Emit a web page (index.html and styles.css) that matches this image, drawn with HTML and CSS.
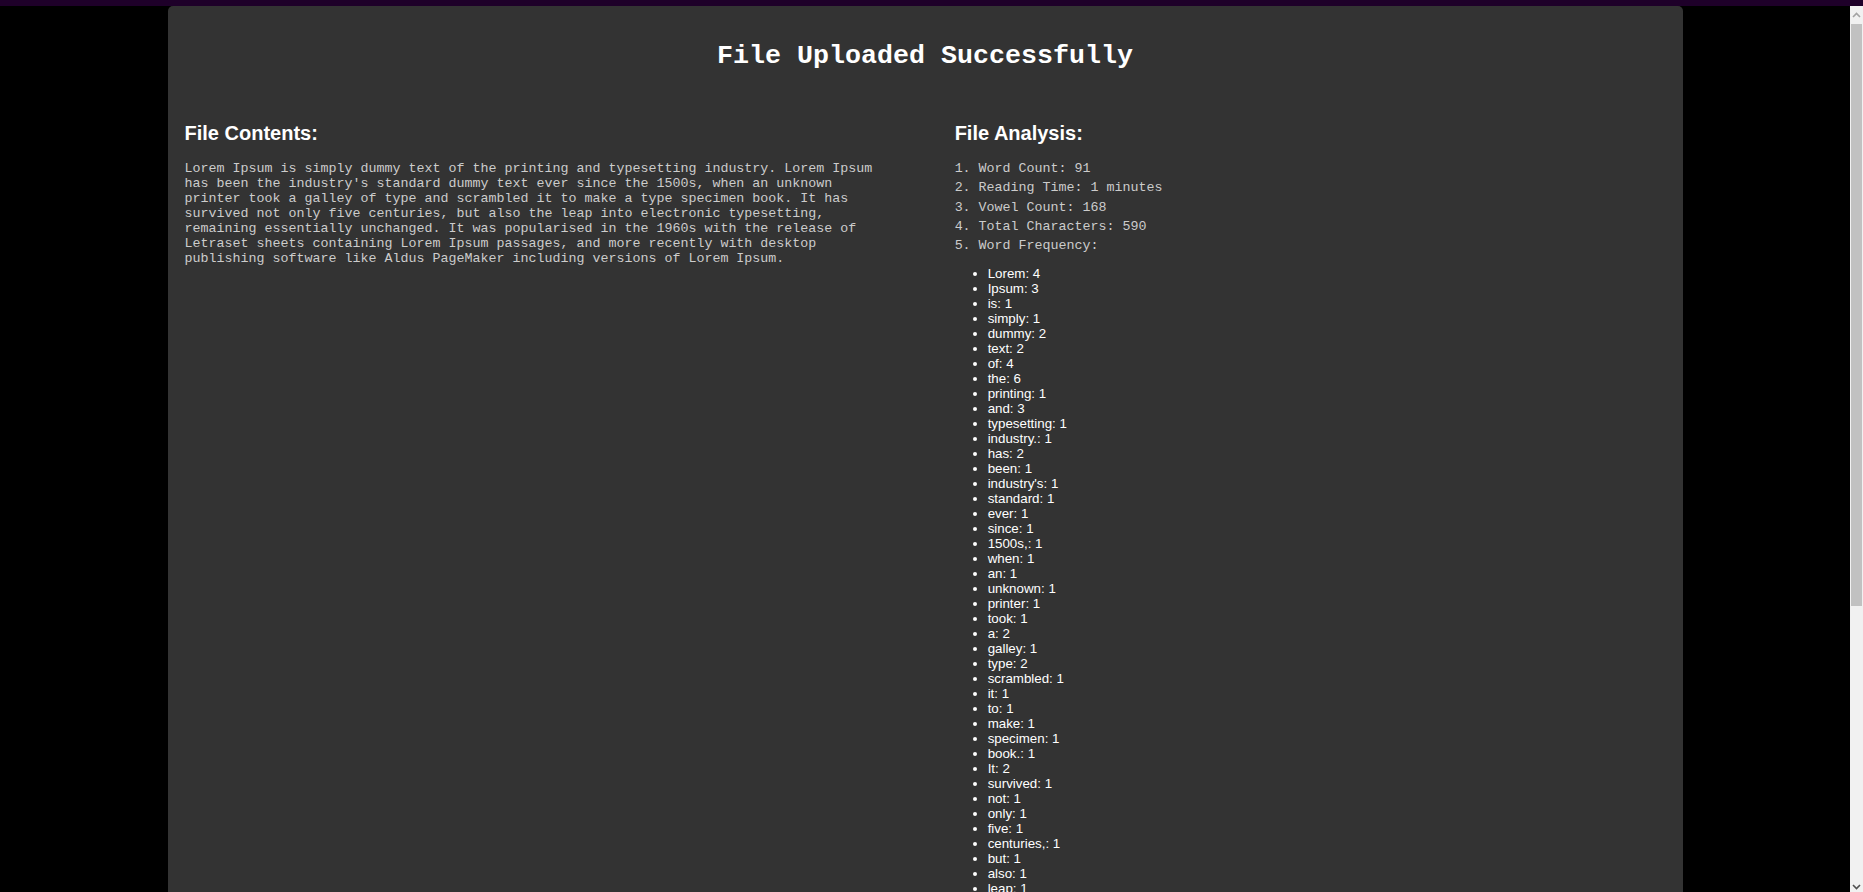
FILE: index.html
```html
<!DOCTYPE html>
<html lang="en">
<head>
<meta charset="utf-8">
<title>File Uploaded Successfully</title>
<link rel="stylesheet" href="styles.css">
</head>
<body>
<div class="topbar"></div>
<div class="page">
  <div class="card">
    <h1 class="title">File Uploaded Successfully</h1>
    <div class="columns">
      <section class="col">
        <h2 class="heading">File Contents:</h2>
        <p class="contents">Lorem Ipsum is simply dummy text of the printing and typesetting industry. Lorem Ipsum has been the industry's standard dummy text ever since the 1500s, when an unknown printer took a galley of type and scrambled it to make a type specimen book. It has survived not only five centuries, but also the leap into electronic typesetting, remaining essentially unchanged. It was popularised in the 1960s with the release of Letraset sheets containing Lorem Ipsum passages, and more recently with desktop publishing software like Aldus PageMaker including versions of Lorem Ipsum.</p>
      </section>
      <section class="col">
        <h2 class="heading">File Analysis:</h2>
        <div class="stats">
          <div class="stat">1. Word Count: 91</div>
          <div class="stat">2. Reading Time: 1 minutes</div>
          <div class="stat">3. Vowel Count: 168</div>
          <div class="stat">4. Total Characters: 590</div>
          <div class="stat">5. Word Frequency:</div>
        </div>
        <ul class="freq">
          <li>Lorem: 4</li>
          <li>Ipsum: 3</li>
          <li>is: 1</li>
          <li>simply: 1</li>
          <li>dummy: 2</li>
          <li>text: 2</li>
          <li>of: 4</li>
          <li>the: 6</li>
          <li>printing: 1</li>
          <li>and: 3</li>
          <li>typesetting: 1</li>
          <li>industry.: 1</li>
          <li>has: 2</li>
          <li>been: 1</li>
          <li>industry's: 1</li>
          <li>standard: 1</li>
          <li>ever: 1</li>
          <li>since: 1</li>
          <li>1500s,: 1</li>
          <li>when: 1</li>
          <li>an: 1</li>
          <li>unknown: 1</li>
          <li>printer: 1</li>
          <li>took: 1</li>
          <li>a: 2</li>
          <li>galley: 1</li>
          <li>type: 2</li>
          <li>scrambled: 1</li>
          <li>it: 1</li>
          <li>to: 1</li>
          <li>make: 1</li>
          <li>specimen: 1</li>
          <li>book.: 1</li>
          <li>It: 2</li>
          <li>survived: 1</li>
          <li>not: 1</li>
          <li>only: 1</li>
          <li>five: 1</li>
          <li>centuries,: 1</li>
          <li>but: 1</li>
          <li>also: 1</li>
          <li>leap: 1</li>
        </ul>
      </section>
    </div>
  </div>
</div>
<div class="scrollbar">
  <div class="sb-btn sb-up"><svg width="9" height="6" viewBox="0 0 9 6"><path d="M1 5 L4.5 1.5 L8 5" fill="none" stroke="#a3a3a3" stroke-width="1.6"/></svg></div>
  <div class="sb-thumb"></div>
  <div class="sb-btn sb-down"><svg width="9" height="6" viewBox="0 0 9 6"><path d="M1 1 L4.5 4.5 L8 1" fill="none" stroke="#505050" stroke-width="1.6"/></svg></div>
</div>
</body>
</html>
```

FILE: styles.css
```css
html, body {
  margin: 0;
  padding: 0;
  height: 100%;
  overflow: hidden;
  background: #000;
}

body {
  font-family: "Liberation Sans", Arial, sans-serif;
  color: #fff;
}

.topbar {
  position: fixed;
  top: 0;
  left: 0;
  right: 0;
  height: 6px;
  background: #1e0029;
  z-index: 5;
}

.page {
  padding-top: 6px;
  padding-right: 13px;
}

.card {
  width: 1515px;
  margin: 0 auto;
  box-sizing: border-box;
  padding: 17px 17px 40px;
  background: #333333;
  border-radius: 5px 5px 0 0;
  min-height: 1400px;
}

.title {
  margin: 18px 0 0;
  font-family: "Liberation Mono", "Courier New", monospace;
  font-size: 26.67px;
  font-weight: bold;
  text-align: center;
  color: #fff;
}

.columns {
  display: flex;
  justify-content: space-between;
  margin-top: 51px;
}

.col {
  width: 48%;
}

.heading {
  margin: 0;
  font-size: 20px;
  font-weight: bold;
  line-height: 23px;
  color: #fff;
}

.contents {
  margin: 16px 0 0;
  font-family: "Liberation Mono", "Courier New", monospace;
  font-size: 13.333px;
  color: #cccccc;
}

.stats {
  margin-top: 14px;
  font-family: "Liberation Mono", "Courier New", monospace;
  font-size: 13.333px;
  color: #cccccc;
}

.stat {
  line-height: 19.3px;
}

.freq {
  margin: 11px 0 0;
  padding-left: 33px;
  font-size: 13.333px;
  line-height: 15px;
  color: #fff;
}

.scrollbar {
  position: fixed;
  top: 6px;
  right: 0;
  bottom: 0;
  width: 13px;
  background: #f1f1f1;
  z-index: 6;
}

.sb-btn {
  height: 18px;
  display: flex;
  align-items: center;
  justify-content: center;
}

.sb-down {
  position: absolute;
  bottom: 0;
  left: 0;
  right: 0;
  height: 14px;
  align-items: flex-end;
  padding-bottom: 2px;
  box-sizing: border-box;
}

.sb-thumb {
  margin: 0 1px;
  height: 582px;
  background: #c1c1c1;
}
```
